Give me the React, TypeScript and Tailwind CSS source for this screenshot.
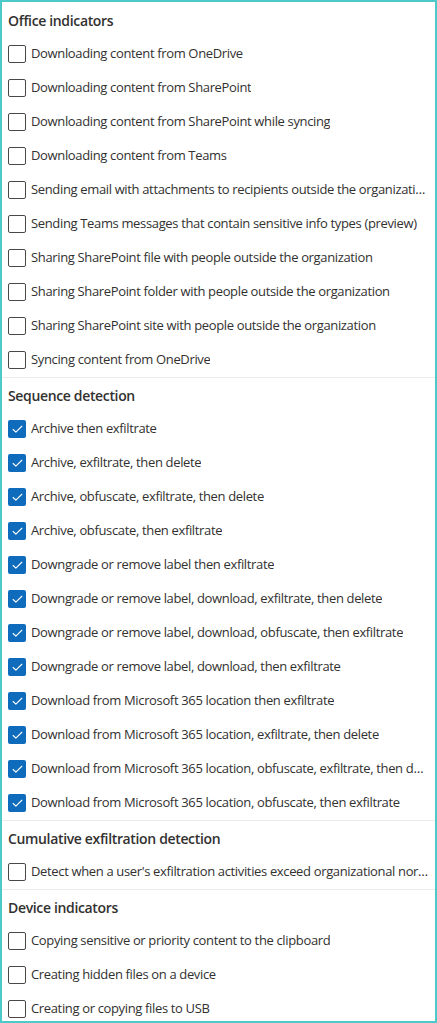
import { Check } from 'lucide-react'

type Group = { title: string; checked: boolean; items: string[] }

const groups: Group[] = [
  {
    title: 'Office indicators',
    checked: false,
    items: [
      'Downloading content from OneDrive',
      'Downloading content from SharePoint',
      'Downloading content from SharePoint while syncing',
      'Downloading content from Teams',
      'Sending email with attachments to recipients outside the organization',
      'Sending Teams messages that contain sensitive info types (preview)',
      'Sharing SharePoint file with people outside the organization',
      'Sharing SharePoint folder with people outside the organization',
      'Sharing SharePoint site with people outside the organization',
      'Syncing content from OneDrive',
    ],
  },
  {
    title: 'Sequence detection',
    checked: true,
    items: [
      'Archive then exfiltrate',
      'Archive, exfiltrate, then delete',
      'Archive, obfuscate, exfiltrate, then delete',
      'Archive, obfuscate, then exfiltrate',
      'Downgrade or remove label then exfiltrate',
      'Downgrade or remove label, download, exfiltrate, then delete',
      'Downgrade or remove label, download, obfuscate, then exfiltrate',
      'Downgrade or remove label, download, then exfiltrate',
      'Download from Microsoft 365 location then exfiltrate',
      'Download from Microsoft 365 location, exfiltrate, then delete',
      'Download from Microsoft 365 location, obfuscate, exfiltrate, then delete',
      'Download from Microsoft 365 location, obfuscate, then exfiltrate',
    ],
  },
  {
    title: 'Cumulative exfiltration detection',
    checked: false,
    items: ["Detect when a user's exfiltration activities exceed organizational norms"],
  },
  {
    title: 'Device indicators',
    checked: false,
    items: [
      'Copying sensitive or priority content to the clipboard',
      'Creating hidden files on a device',
      'Creating or copying files to USB',
    ],
  },
]

function Row({ label, checked }: { label: string; checked: boolean }) {
  return (
    <label className="flex h-[34px] items-center gap-[5px] pl-[6px] pr-[6px]">
      {checked ? (
        <span className="flex h-[18px] w-[18px] flex-none items-center justify-center rounded-[2px] bg-[#0f6cbd]">
          <Check size={13} strokeWidth={2} className="text-white" />
        </span>
      ) : (
        <span className="h-[18px] w-[18px] flex-none rounded-[2px] border border-[#4a4846] bg-white" />
      )}
      <span className="truncate text-[13px] text-[#323130]">{label}</span>
    </label>
  )
}

export default function App() {
  return (
    <div className="h-[1023px] w-[437px] overflow-hidden bg-white font-['Open_Sans',sans-serif] tracking-[-0.35px]">
      <div className="h-full border-2 border-[#4cc9c9] pt-[1px]">
        {groups.map((g, i) => (
          <section key={g.title} className={i > 0 ? 'border-t border-[#edebe9]' : ''}>
            <h2 className="flex h-[34px] items-center pl-[6px] text-[14px] font-semibold text-[#323130]">
              {g.title}
            </h2>
            {g.items.map((it) => (
              <Row key={it} label={it} checked={g.checked} />
            ))}
          </section>
        ))}
      </div>
    </div>
  )
}
